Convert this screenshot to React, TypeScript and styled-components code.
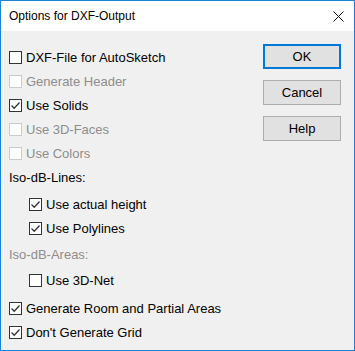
import React from 'react';
import styled, {createGlobalStyle} from "styled-components";

type OptionType = {
  label: string
  checked?: boolean
  disabled?: boolean
  indent?: boolean
  kind?: 'check' | 'label'
  top?: number
}

const options: Array<OptionType> = [
  {label: 'DXF-File for AutoSketch'},
  {label: 'Generate Header', disabled: true},
  {label: 'Use Solids', checked: true},
  {label: 'Use 3D-Faces', disabled: true},
  {label: 'Use Colors', disabled: true},
  {label: 'Iso-dB-Lines:', kind: 'label'},
  {label: 'Use actual height', checked: true, indent: true, top: 3},
  {label: 'Use Polylines', checked: true, indent: true},
  {label: 'Iso-dB-Areas:', kind: 'label', disabled: true, top: 2},
  {label: 'Use 3D-Net', indent: true, top: 2},
  {label: 'Generate Room and Partial Areas', checked: true, top: 4},
  {label: "Don't Generate Grid", checked: true},
]

const Check = ({checked, disabled}: { checked?: boolean, disabled?: boolean }) => (
  <Box $disabled={disabled}>
    {checked && (
      <svg width="11" height="11" viewBox="0 0 11 11">
        <polyline points="1.5,5.5 4.2,8.2 9.5,2.5" fill="none" stroke="#333" strokeWidth="1.3"/>
      </svg>
    )}
  </Box>
)

export default function App() {
  return (
    <>
      <GlobalStyle/>
      <Window>
        <TitleBar>
          <Title>Options for DXF-Output</Title>
          <svg width="11" height="11" viewBox="0 0 11 11">
            <path d="M0.5 0.5 L10.5 10.5 M10.5 0.5 L0.5 10.5" stroke="#111" strokeWidth="1"/>
          </svg>
        </TitleBar>
        <Body>
          <OptionList>
            {options.map((o) => (
              <Row key={o.label} $indent={o.indent} $top={o.top ?? 0} $disabled={o.disabled}>
                {o.kind !== 'label' && <Check checked={o.checked} disabled={o.disabled}/>}
                <span>{o.label}</span>
              </Row>
            ))}
          </OptionList>
          <Buttons>
            <Button $primary>OK</Button>
            <Button>Cancel</Button>
            <Button>Help</Button>
          </Buttons>
        </Body>
      </Window>
    </>
  );
}

const GlobalStyle = createGlobalStyle`
    body {
        margin: 0;
        background: #ffffff;
        font-family: "Liberation Sans", Arial, sans-serif;
    }
`

const Window = styled.div`
    width: 355px;
    height: 351px;
    box-sizing: border-box;
    border: 1px solid #1883d7;
    background: #f0f0f0;
    display: flex;
    flex-direction: column;
`

const TitleBar = styled.div`
    height: 30px;
    background: #ffffff;
    display: flex;
    align-items: center;
    justify-content: space-between;
    padding: 0 10px 0 8px;
`

const Title = styled.span`
    font-size: 12px;
    color: #000;
`

const Body = styled.div`
    display: flex;
    padding: 14px 0 0 8px;
`

const OptionList = styled.div`
    flex: 1;
    display: flex;
    flex-direction: column;
`

const Row = styled.div<{ $indent?: boolean, $top: number, $disabled?: boolean }>`
    height: 24px;
    margin-top: ${p => p.$top}px;
    padding-left: ${p => p.$indent ? 20 : 0}px;
    display: flex;
    align-items: center;
    gap: 4px;
    font-size: 13px;
    color: ${p => p.$disabled ? '#8d8d8d' : '#000'};
`

const Box = styled.div<{ $disabled?: boolean }>`
    width: 13px;
    height: 13px;
    box-sizing: border-box;
    border: 1px solid ${p => p.$disabled ? '#cccccc' : '#333333'};
    background: #fff;
    display: flex;
    align-items: center;
    justify-content: center;
`

const Buttons = styled.div`
    display: flex;
    flex-direction: column;
    gap: 11px;
    margin-top: -1px;
    padding-right: 13px;
`

const Button = styled.div<{ $primary?: boolean }>`
    width: 78px;
    height: 25px;
    box-sizing: border-box;
    border: ${p => p.$primary ? '2px solid #0078d7' : '1px solid #adadad'};
    background: #e1e1e1;
    display: flex;
    align-items: center;
    justify-content: center;
    font-size: 13px;
    color: #000;
`
